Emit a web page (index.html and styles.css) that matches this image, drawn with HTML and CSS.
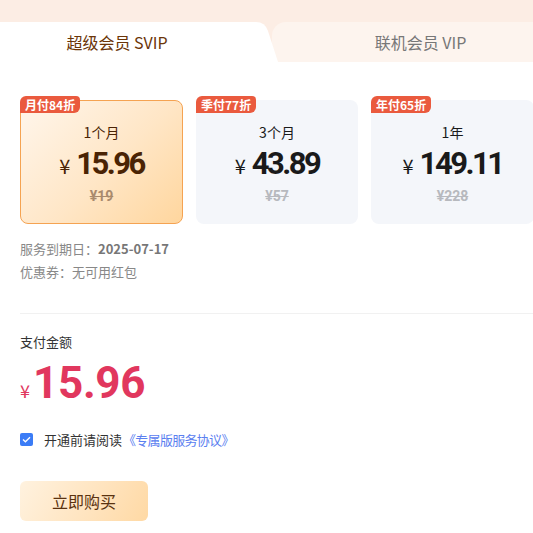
FILE: index.html
```html
<!DOCTYPE html>
<html lang="zh">
<head>
<meta charset="utf-8">
<link rel="stylesheet" href="styles.css">
</head>
<body>
<div class="page">
  <div class="tabbar">
    <div class="tab tab-active">超级会员 SVIP</div>
    <div class="tab tab-idle">联机会员 VIP</div>
  </div>

  <div class="plans">
    <div class="plan plan-selected">
      <span class="badge">月付84折</span>
      <div class="plan-name">1个月</div>
      <div class="plan-price"><span class="yen">¥</span><span class="num">15.96</span></div>
      <div class="plan-orig">¥19</div>
    </div>
    <div class="plan">
      <span class="badge">季付77折</span>
      <div class="plan-name">3个月</div>
      <div class="plan-price"><span class="yen">¥</span><span class="num">43.89</span></div>
      <div class="plan-orig">¥57</div>
    </div>
    <div class="plan">
      <span class="badge">年付65折</span>
      <div class="plan-name">1年</div>
      <div class="plan-price"><span class="yen">¥</span><span class="num">149.11</span></div>
      <div class="plan-orig">¥228</div>
    </div>
  </div>

  <div class="info">
    <div class="info-row">服务到期日：<b>2025-07-17</b></div>
    <div class="info-row">优惠券：无可用红包</div>
  </div>

  <div class="divider"></div>

  <div class="pay">
    <div class="pay-label">支付金额</div>
    <div class="pay-amount"><span class="pay-yen">¥</span><span class="pay-num">15.96</span></div>
  </div>

  <div class="agree">
    <span class="check"><svg width="9" height="7" viewBox="0 0 9 7"><path d="M1 3.5 L3.4 5.8 L8 1.2" fill="none" stroke="#fff" stroke-width="1.3"/></svg></span>
    <span class="agree-text">开通前请阅读</span>
    <span class="agree-link">《专属版服务协议》</span>
  </div>

  <button class="buy">立即购买</button>
</div>
</body>
</html>
```

FILE: styles.css
```css
html, body {
  margin: 0;
  padding: 0;
  background: #fff;
  overflow: hidden;
}
body {
  font-family: "Noto Sans CJK SC", "Noto Sans", sans-serif;
  width: 533px;
  height: 533px;
}
.page {
  width: 533px;
  overflow: hidden;
}
.tabbar {
  display: flex;
  background: #fcede4;
  padding-top: 22px;
  height: 40px;
}
.tab {
  height: 40px;
  display: flex;
  align-items: center;
  justify-content: center;
  font-size: 16px;
}
.tab-active {
  flex: 0 0 278px;
  position: relative;
  z-index: 1;
  background: #fff;
  color: #6b3508;
  clip-path: path('M0 0 H256 Q265 0 268 9 L278 40 H0 Z');
  box-sizing: border-box;
  padding-right: 44px;
}
.tab-idle {
  flex: 1;
  margin-left: -6px;
  background: #fdf4ee;
  border-top-left-radius: 14px;
  color: #777;
  padding-left: 36px;
}
.plans {
  display: grid;
  grid-template-columns: 163px 162px 163px;
  column-gap: 13px;
  margin: 38px 0 0 20px;
  width: 540px;
}
.plan {
  position: relative;
  height: 124px;
  border-radius: 8px;
  background: #f4f6fa;
  box-sizing: border-box;
  display: flex;
  flex-direction: column;
  align-items: center;
  padding-top: 23px;
  color: #1a1a1a;
}
.plan-selected {
  border: 1px solid #f5a352;
  background: linear-gradient(135deg, #fff6ec 0%, #ffe6c6 55%, #ffd69e 100%);
  color: #4a2304;
  padding-top: 22px;
}
.badge {
  position: absolute;
  left: 0;
  top: -4px;
  height: 17px;
  padding: 0 5px 0 5px;
  background: #ea5a3e;
  color: #fff;
  font-size: 12px;
  font-weight: 700;
  line-height: 17px;
  border-radius: 6px 4px 6px 0;
}
.plan-selected .badge {
  left: -1px;
  top: -5px;
}
.plan-name {
  font-size: 14px;
  line-height: 18px;
}
.plan-price {
  display: flex;
  align-items: baseline;
  margin-top: 4px;
  height: 38px;
}
.yen {
  font-size: 20px;
  margin-right: 6px;
  font-family: "Noto Sans CJK SC", sans-serif;
}
.num {
  font-family: Roboto, "Noto Sans", sans-serif;
  font-weight: 700;
  font-size: 31px;
  letter-spacing: -2.5px;
  line-height: 38px;
}
.plan-orig {
  margin-top: 5px;
  font-size: 14px;
  font-weight: 700;
  font-family: Roboto, "Noto Sans CJK SC", sans-serif;
  color: #b7b9be;
  text-decoration: line-through;
}
.plan-selected .plan-orig {
  color: #a98a6d;
}
.info {
  margin: 16px 0 0 20px;
  display: flex;
  flex-direction: column;
  gap: 5px;
}
.info-row {
  font-size: 13px;
  line-height: 18px;
  color: #888;
}
.info-row b {
  color: #777;
  font-weight: 700;
}
.divider {
  margin: 32px 0 0 20px;
  height: 1px;
  background: #f1f1f1;
}
.pay {
  margin: 19px 0 0 20px;
}
.pay-label {
  font-size: 13px;
  line-height: 18px;
  color: #333;
}
.pay-amount {
  display: flex;
  align-items: baseline;
  color: #e1375e;
  margin-top: 4px;
}
.pay-yen {
  font-size: 18px;
  margin-right: 3px;
}
.pay-num {
  font-family: Roboto, "Noto Sans", sans-serif;
  font-weight: 700;
  font-size: 44px;
  line-height: 56px;
  letter-spacing: -0.3px;
}
.agree {
  display: flex;
  align-items: center;
  margin: 19px 0 0 20px;
  font-size: 13px;
}
.check {
  width: 13px;
  height: 13px;
  border-radius: 2px;
  background: #3b7cf6;
  display: flex;
  align-items: center;
  justify-content: center;
  margin-right: 11px;
}
.agree-text {
  color: #333;
}
.agree-link {
  color: #5b80f0;
  margin-left: 1px;
  letter-spacing: -0.7px;
}
.buy {
  display: block;
  margin: 32px 0 0 20px;
  width: 128px;
  height: 40px;
  border: none;
  border-radius: 6px;
  background: linear-gradient(120deg, #fff2df 0%, #ffe3bd 60%, #ffd9a4 100%);
  color: #5a3210;
  font-size: 16px;
  font-family: "Noto Sans CJK SC", sans-serif;
  padding: 0;
}
```
